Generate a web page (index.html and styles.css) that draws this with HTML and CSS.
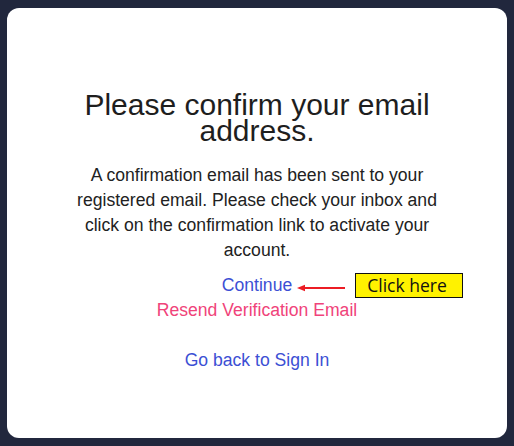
FILE: index.html
```html
<!DOCTYPE html>
<html lang="en">
<head>
<meta charset="utf-8">
<title>Confirm email</title>
<link rel="stylesheet" href="styles.css">
</head>
<body>
<main class="card">
  <h1 class="title">Please confirm your email address.</h1>
  <p class="message">A confirmation email has been sent to your registered email. Please check your inbox and click on the confirmation link to activate your account.</p>
  <div class="actions">
    <div class="row">
      <span class="anchor">
        <a class="link link-blue" href="#">Continue</a>
        <span class="callout">
          <svg class="arrow" width="50" height="10" viewBox="0 0 50 10">
            <line x1="6" y1="5" x2="48" y2="5" stroke="#ec1c24" stroke-width="2.2"/>
            <polygon points="0,5 8,1.8 8,8.2" fill="#ec1c24"/>
          </svg>
          <span class="note">Click here</span>
        </span>
      </span>
    </div>
    <div class="row"><a class="link link-pink" href="#">Resend Verification Email</a></div>
    <div class="row row-gap"><a class="link link-blue" href="#">Go back to Sign In</a></div>
  </div>
</main>
</body>
</html>
```
FILE: styles.css
```css
* { box-sizing: border-box; }
html, body { margin: 0; }
body {
  background: #21273d;
  padding: 8px 7px;
  height: 446px;
  font-family: "Liberation Sans", Arial, sans-serif;
}
.card {
  background: #ffffff;
  border-radius: 12px;
  height: 430px;
  padding: 84px 65px 0;
  text-align: center;
}
.title {
  margin: 0;
  font-size: 30px;
  font-weight: 400;
  line-height: 26px;
  color: #1e1e1e;
}
.message {
  margin: 19px 0 0;
  font-size: 17.6px;
  line-height: 25px;
  color: #222222;
}
.actions {
  margin-top: 9.5px;
}
.row {
  line-height: 25px;
  font-size: 17.6px;
}
.row-gap { margin-top: 25px; }
.anchor { position: relative; display: inline-block; }
.link { text-decoration: none; }
.link-blue { color: #3c4fd4; }
.link-pink { color: #f0437a; }
.callout {
  position: absolute;
  left: 100%;
  top: 0;
  display: flex;
  align-items: center;
  white-space: nowrap;
}
.arrow { display: block; margin-left: 5px; margin-top: 5px; }
.note {
  margin-left: 8px;
  width: 108px;
  height: 25px;
  background: #fff200;
  border: 1px solid #111111;
  font-family: "Open Sans", "Noto Sans", sans-serif;
  font-size: 17.5px;
  line-height: 22px;
  color: #111111;
  text-align: left;
  padding-left: 11px;
}
```
